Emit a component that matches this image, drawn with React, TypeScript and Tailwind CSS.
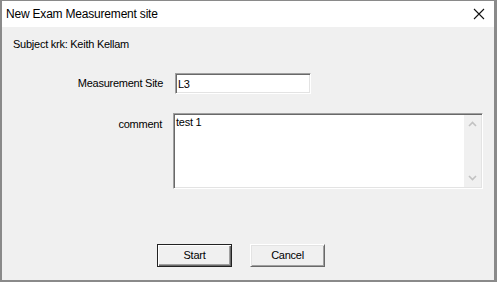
import { useState } from 'react'

const font = { fontFamily: '"Liberation Sans", Arial, sans-serif' }

export default function App() {
  const [site, setSite] = useState('L3')
  const [comment, setComment] = useState('test 1')

  return (
    <div className="w-[497px] h-[282px] bg-[#f0f0f0] text-black overflow-hidden" style={font}>
      <div className="w-full h-full flex flex-col border-t border-l-2 border-r-[3px] border-b-2 border-[#8a8a8a]">
        {/* title bar */}
        <div className="h-[26px] bg-white flex items-center justify-between shrink-0">
          <span className="ml-[4px] text-[12px] leading-none tracking-[-0.2px]">New Exam Measurement site</span>
          <svg width="12" height="12" viewBox="0 0 12 12" className="mr-[9px]">
            <path d="M1 1 L11 11 M11 1 L1 11" stroke="#111" strokeWidth="1.1" fill="none" />
          </svg>
        </div>

        {/* body */}
        <div className="flex flex-col flex-1 text-[11px] tracking-[-0.25px]">
          <div className="mt-[11px] ml-[11px] leading-[13px]">Subject krk: Keith Kellam</div>

          <div className="flex items-center mt-[22px]">
            <label className="w-[161px] text-right leading-[13px]">Measurement Site</label>
            <input
              value={site}
              onChange={e => setSite(e.target.value)}
              className="ml-[12px] w-[136px] h-[21px] px-[2px] bg-white outline-none text-[11px] border border-t-[#a0a0a0] border-l-[#a0a0a0] border-r-white border-b-white shadow-[inset_1px_1px_0_#696969,inset_-1px_-1px_0_#e3e3e3]"
              style={font}
            />
          </div>

          <div className="flex items-start mt-[19px]">
            <label className="w-[160px] text-right leading-[13px] pt-[5px]">comment</label>
            <div className="ml-[11px] w-[310px] h-[76px] flex bg-white border border-t-[#a0a0a0] border-l-[#a0a0a0] border-r-white border-b-white shadow-[inset_1px_1px_0_#696969,inset_-1px_-1px_0_#e3e3e3]">
              <textarea
                value={comment}
                onChange={e => setComment(e.target.value)}
                className="flex-1 resize-none outline-none bg-transparent px-[2px] pt-[2px] text-[11px] leading-[13px] overflow-hidden"
                style={font}
              />
              <div className="w-[17px] my-[1px] mr-[1px] bg-[#f0f0f0] flex flex-col items-center justify-between py-[6px]">
                <svg width="9" height="6" viewBox="0 0 9 6">
                  <path d="M1 5 L4.5 1.5 L8 5" stroke="#c2c2c2" strokeWidth="1.6" fill="none" />
                </svg>
                <svg width="9" height="6" viewBox="0 0 9 6">
                  <path d="M1 1 L4.5 4.5 L8 1" stroke="#c2c2c2" strokeWidth="1.6" fill="none" />
                </svg>
              </div>
            </div>
          </div>

          <div className="flex mt-[55px] ml-[155px] gap-[18px]">
            <button className="w-[75px] h-[23px] bg-[#f0f0f0] text-[11px] border border-[#222] shadow-[inset_1px_1px_0_#fff,inset_-1px_-1px_0_#696969,inset_-2px_-2px_0_#a0a0a0]" style={font}>
              Start
            </button>
            <button className="w-[75px] h-[23px] bg-[#f0f0f0] text-[11px] border border-t-white border-l-white border-r-[#696969] border-b-[#696969] shadow-[inset_1px_1px_0_#e3e3e3,inset_-1px_-1px_0_#a0a0a0]" style={font}>
              Cancel
            </button>
          </div>
        </div>
      </div>
    </div>
  )
}
